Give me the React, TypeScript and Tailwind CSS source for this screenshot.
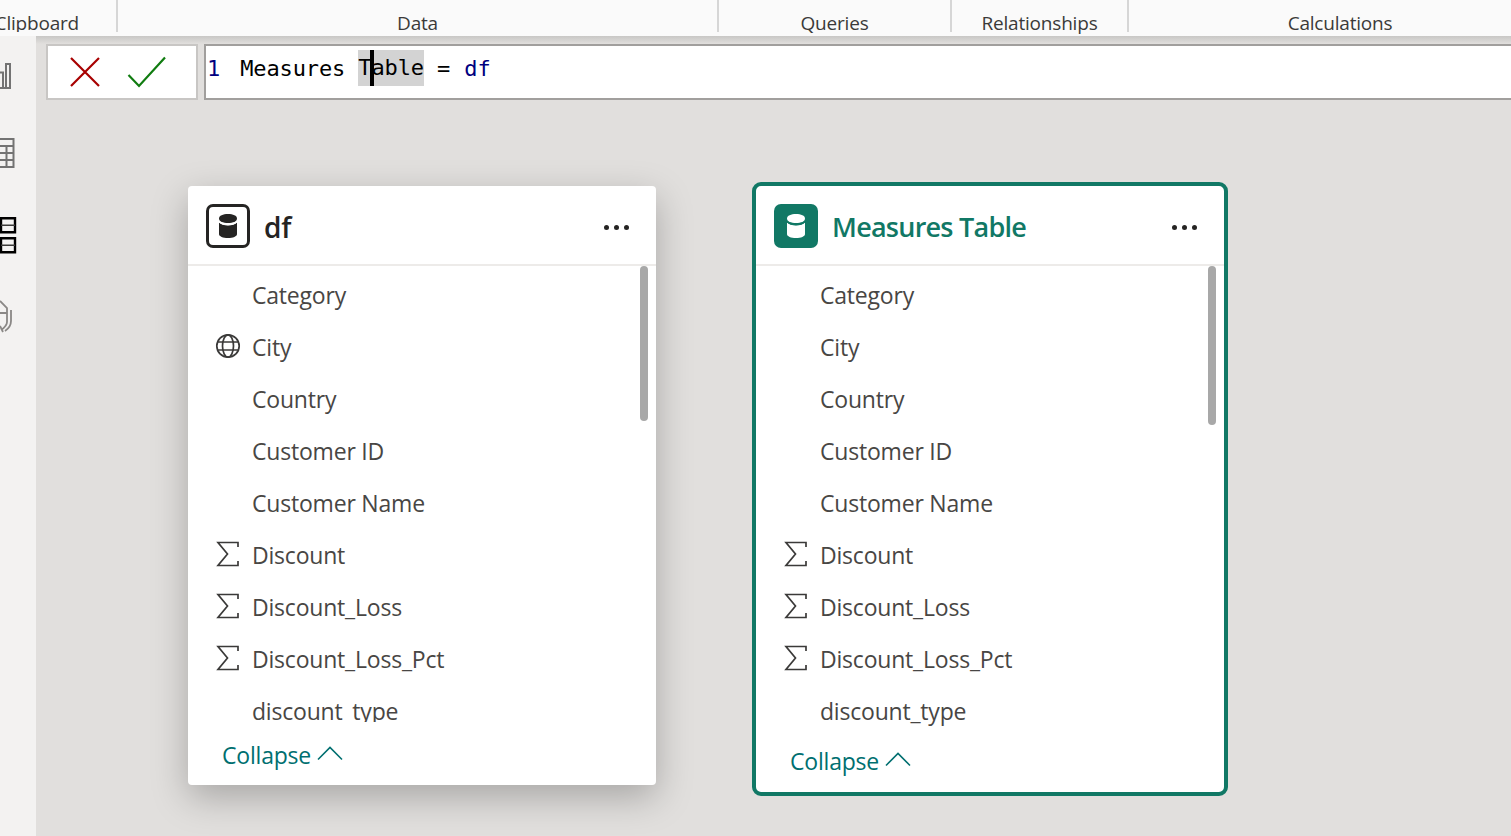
import React from 'react';

const segoe = "font-['Open_Sans','Noto_Sans',sans-serif]";

const DbIcon = ({ color, gap }: { color: string; gap: string }) => (
  <svg width="20" height="26" viewBox="0 0 20 26">
    <path d="M1 5.500C1 2.500 5 1 10 1s9 1.500 9 4.500S15 10 10 10 1 8.500 1 5.500Z" fill={color} />
    <path d="M1 9.500C3 11.500 6 12.500 10 12.500s7-1 9-3V21c0 2.500-4 4-9 4s-9-1.500-9-4Z" fill={color} />
    <path d="M1 8.500C3 10.500 6 11.500 10 11.500s7-1 9-3" fill="none" stroke={gap} strokeWidth="1.500" />
  </svg>
);

const SigmaIcon = () => (
  <svg width="24" height="26" viewBox="0 0 24 26" fill="none" stroke="#3b3a39" strokeWidth="1.700">
    <path d="M22 6V1.500H2L11.500 13 2 24.500H22V20" />
  </svg>
);

const GlobeIcon = () => (
  <svg width="26" height="26" viewBox="0 0 26 26" fill="none" stroke="#3b3a39" strokeWidth="1.700">
    <circle cx="13" cy="13" r="11.200" />
    <ellipse cx="13" cy="13" rx="5.500" ry="11.200" />
    <path d="M2.600 9h20.800M2.600 17h20.800" />
  </svg>
);

type Field = { name: string; icon?: 'sigma' | 'globe' };

const Row = ({ field, showGlobe }: { field: Field; showGlobe: boolean }) => (
  <div className="flex h-[52px] items-center shrink-0">
    <div className="flex w-[64px] justify-end pr-[11px] h-[26px] items-center mb-[4px]">
      {field.icon === 'sigma' && <div className="mr-[1px]"><SigmaIcon /></div>}
      {field.icon === 'globe' && showGlobe && <GlobeIcon />}
    </div>
    <span className="mb-[2px] text-[23px] text-[#484644] tracking-[-0.2px]">{field.name}</span>
  </div>
);

const fields: Field[] = [
  { name: 'Category' },
  { name: 'City', icon: 'globe' },
  { name: 'Country' },
  { name: 'Customer ID' },
  { name: 'Customer Name' },
  { name: 'Discount', icon: 'sigma' },
  { name: 'Discount_Loss', icon: 'sigma' },
  { name: 'Discount_Loss_Pct', icon: 'sigma' },
  { name: 'discount_type' },
];

const Dots = () => (
  <div className="flex gap-[5px] mt-[2px]">
    <span className="w-[5px] h-[5px] rounded-full bg-[#252423]" />
    <span className="w-[5px] h-[5px] rounded-full bg-[#252423]" />
    <span className="w-[5px] h-[5px] rounded-full bg-[#252423]" />
  </div>
);

const CollapseLink = () => (
  <div className="flex items-center gap-[6px] text-[23px] tracking-[-0.2px] text-[#006f70]">
    <span>Collapse</span>
    <svg width="26" height="16" viewBox="0 0 26 16" fill="none" stroke="#006f70" strokeWidth="1.600" className="mb-[4px]">
      <path d="M1 14.500 13 2.500l12 12" />
    </svg>
  </div>
);

const DfCard = () => (
  <div className="absolute left-[152px] top-[150px] w-[468px] h-[599px] bg-white rounded-[4px] shadow-[0_12px_36px_rgba(0,0,0,0.26)] flex flex-col">
    <div className="h-[80px] shrink-0 border-b-2 border-[#edebe9] flex items-center pt-[2px] pl-[18px] pr-[27px]">
      <div className="w-[44px] h-[44px] rounded-[7px] border-[3px] border-[#252423] flex items-center justify-center">
        <DbIcon color="#252423" gap="#ffffff" />
      </div>
      <span className="ml-[14px] mt-[2px] text-[28px] font-semibold text-[#252423] flex-1 tracking-[-0.3px]">df</span>
      <Dots />
    </div>
    <div className="relative h-[456px] overflow-hidden pt-[4px] flex flex-col">
      {fields.map((f) => <Row key={f.name} field={f} showGlobe />)}
      <div className="absolute left-[452px] top-0 w-[8px] h-[155px] rounded-[4px] bg-[#a8a8a8]" />
    </div>
    <div className="pl-[34px] pt-[16px]"><CollapseLink /></div>
  </div>
);

const MeasuresCard = () => (
  <div className="absolute left-[716px] top-[146px] w-[476px] h-[614px] bg-white rounded-[9px] border-4 border-[#117865] flex flex-col">
    <div className="h-[80px] shrink-0 border-b-2 border-[#edebe9] flex items-center pt-[2px] pl-[18px] pr-[27px]">
      <div className="w-[44px] h-[44px] rounded-[7px] bg-[#117865] flex items-center justify-center">
        <DbIcon color="#ffffff" gap="#117865" />
      </div>
      <span className="ml-[14px] mt-[2px] text-[27px] font-semibold text-[#117865] flex-1 tracking-[-0.75px]">Measures Table</span>
      <Dots />
    </div>
    <div className="relative h-[470px] overflow-hidden pt-[4px] flex flex-col">
      {fields.map((f) => <Row key={f.name} field={f} showGlobe={false} />)}
      <div className="absolute left-[452px] top-0 w-[8px] h-[159px] rounded-[4px] bg-[#a8a8a8]" />
    </div>
    <div className="pl-[34px] pt-[8px]"><CollapseLink /></div>
  </div>
);

const Sidebar = () => (
  <div className="w-[36px] shrink-0 bg-[#f3f2f1] overflow-hidden flex flex-col pt-[27px]">
    <svg width="12" height="26" viewBox="0 0 12 26" fill="none" stroke="#737373" strokeWidth="2" className="shrink-0">
      <path d="M0 25h11M0 9.500h3V25M6 1h4v24H6Z" />
    </svg>
    <svg width="15" height="31" viewBox="0 0 15 31" fill="none" stroke="#737373" strokeWidth="2" className="shrink-0 mt-[49px]">
      <path d="M0 1h13.500V29H0M0 8h13.500M0 15h13.500M0 22h13.500M6.500 8v21" />
    </svg>
    <svg width="17" height="37" viewBox="0 0 17 37" fill="none" className="shrink-0 mt-[48px]">
      <path d="M1 1.200h14v14H1ZM1 21.200h14v14H1Z" stroke="#000000" strokeWidth="2.400" />
      <path d="M1 8.200h14M1 28.200h14" stroke="#3b3a39" strokeWidth="1.500" />
    </svg>
    <svg width="14" height="33" viewBox="0 0 14 33" fill="none" stroke="#8a8886" strokeWidth="1.800" className="shrink-0 mt-[46px]">
      <path d="M0 1 7 8v5H0M11 10v11c0 4-3 8-6 10M7 14v8c0 3-3 6-6 8M0 26l3 6" />
    </svg>
  </div>
);

const FormulaBar = () => (
  <div className="flex gap-[6px] h-[56px] pl-[10px]">
    <div className="w-[152px] shrink-0 bg-white border-2 border-[#c8c6c4] flex items-center pl-[21px] gap-[26px]">
      <svg width="32" height="32" viewBox="0 0 32 32" fill="none" stroke="#a80000" strokeWidth="2.200">
        <path d="M2 2l28 28M30 2 2 30" />
      </svg>
      <svg width="40" height="32" viewBox="0 0 40 32" fill="none" stroke="#107c10" strokeWidth="2.200">
        <path d="M1.500 19 12 30 38 1.500" />
      </svg>
    </div>
    <div className="flex-1 bg-white border-y-2 border-l-2 border-[#a19f9d] pl-[1px] pt-[4px]">
      <div className="flex h-[36px] items-center font-['DejaVu_Sans_Mono',monospace] text-[22px] tracking-[-0.12px] whitespace-pre">
        <span className="text-[#000080]">1</span>
        <span className="ml-[20px] text-black">Measures </span>
        <span className="relative bg-[#d3d3d3] text-black h-[36px] leading-[36px]">
          Table
          <span className="absolute left-[12px] top-0 w-[4px] h-[36px] bg-black" />
        </span>
        <span className="text-black"> = </span>
        <span className="ml-[1px] text-[#000080]">df</span>
      </div>
    </div>
  </div>
);

const Ribbon = () => (
  <div className="h-[36px] shrink-0 bg-[#fafafa] flex text-[19px] text-[#3b3a39] tracking-[-0.2px] leading-none overflow-hidden">
    <div className="w-[118px] h-[32px] shrink-0 border-r-2 border-[#d6d6d6] flex items-end justify-end pr-[37px] overflow-hidden whitespace-nowrap">
      <span className="-mb-[1px]">Clipboard</span>
    </div>
    <div className="w-[601px] h-[32px] shrink-0 border-r-2 border-[#d6d6d6] flex items-end justify-center">
      <span className="-mb-[1px]">Data</span>
    </div>
    <div className="w-[233px] h-[32px] shrink-0 border-r-2 border-[#d6d6d6] flex items-end justify-center">
      <span className="-mb-[1px]">Queries</span>
    </div>
    <div className="w-[177px] h-[32px] shrink-0 border-r-2 border-[#d6d6d6] flex items-end justify-center">
      <span className="-mb-[1px]">Relationships</span>
    </div>
    <div className="w-[422px] h-[32px] shrink-0 flex items-end justify-center">
      <span className="-mb-[1px]">Calculations</span>
    </div>
  </div>
);

export default function App() {
  return (
    <div className={`${segoe} h-screen w-full overflow-hidden flex flex-col bg-[#e1dfdd]`}>
      <Ribbon />
      <div className="flex flex-1 min-h-0">
        <Sidebar />
        <div className="relative flex-1 bg-[#e1dfdd] overflow-hidden">
          <div className="h-[8px] bg-gradient-to-b from-[#c8c7c5] to-[#e1dfdd]" />
          <FormulaBar />
          <DfCard />
          <MeasuresCard />
        </div>
      </div>
    </div>
  );
}
